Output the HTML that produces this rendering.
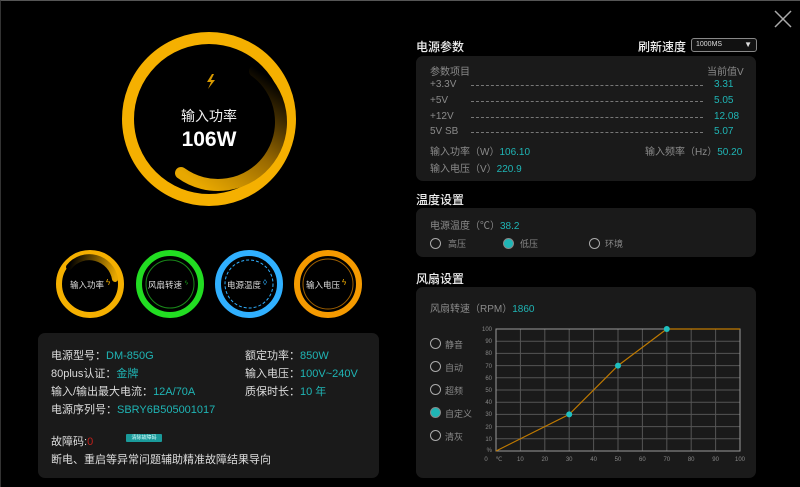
<!DOCTYPE html>
<html><head><meta charset="utf-8"><style>
*{margin:0;padding:0;box-sizing:border-box}
body{width:800px;height:487px;background:#000;overflow:hidden;position:relative;font-family:"Liberation Sans","Noto Sans CJK SC",sans-serif;color:#ddd;border-top:1px solid #555;border-left:1px solid #333}
.abs{position:absolute}
.panel{position:absolute;background:#1a1a1a;border-radius:7px}
.t{position:absolute;font-size:11px;white-space:nowrap}
.g{color:#8a8a8a}
.c{color:#1fb5b5}
.h{position:absolute;font-size:12px;color:#eee;font-weight:500;white-space:nowrap}
.dash{position:absolute;border-top:1px dashed #777;height:0}
.rad{position:absolute;width:11px;height:11px;border:1.5px solid #aaa;border-radius:50%}
.rad.on{background:#1fb5b5;border-color:#888}
</style></head><body>
<svg class="abs" style="left:0;top:0" width="400" height="330">
<defs>
<linearGradient id="ga" gradientUnits="userSpaceOnUse" x1="190" y1="178" x2="262" y2="72"><stop offset="0" stop-color="#e8a800"/><stop offset="0.45" stop-color="#9a6a00"/><stop offset="1" stop-color="#000"/></linearGradient>
<linearGradient id="gb" gradientUnits="userSpaceOnUse" x1="68" y1="266" x2="114" y2="278"><stop offset="0" stop-color="#000"/><stop offset="1" stop-color="#e8a800"/></linearGradient>
</defs>
<circle cx="208" cy="118" r="81" fill="none" stroke="#f5b000" stroke-width="12"/>
<path d="M180 172 A58 58 0 0 0 254 70" fill="none" stroke="url(#ga)" stroke-width="12" stroke-linecap="round"/>
<path d="M211 73 l-5 8 h4 l-3 7 l7-9 h-4 l3-6z" fill="#d89a00"/>
<text x="208" y="120" fill="#eee" font-size="14" text-anchor="middle" font-family="Noto Sans CJK SC">输入功率</text>
<text x="208" y="145" fill="#fff" font-size="21" font-weight="bold" text-anchor="middle" font-family="Liberation Sans">106W</text>
<circle cx="89" cy="283" r="31" fill="none" stroke="#f5b000" stroke-width="6"/>
<path d="M68 266 A26 26 0 0 1 114 278" fill="none" stroke="url(#gb)" stroke-width="6" stroke-linecap="round"/>
<circle cx="169" cy="283" r="31" fill="none" stroke="#22dd22" stroke-width="6"/>
<circle cx="169" cy="283" r="24" fill="none" stroke="#1a8a1a" stroke-width="1"/>
<circle cx="248" cy="283" r="31" fill="none" stroke="#30b0ff" stroke-width="6"/>
<circle cx="248" cy="283" r="24" fill="none" stroke="#30b0ff" stroke-width="1" stroke-dasharray="3 2"/>
<circle cx="327" cy="283" r="31" fill="none" stroke="#f59a00" stroke-width="6"/>
<circle cx="327" cy="283" r="25" fill="none" stroke="#a06000" stroke-width="1"/>
<g font-size="8.5" fill="#ddd" text-anchor="middle" font-family="Noto Sans CJK SC">
<text x="86" y="287">输入功率</text><text x="164" y="287">风扇转速</text><text x="243" y="287">电源温度</text><text x="322" y="287">输入电压</text></g>
<text x="105" y="284" fill="#f5b000" font-size="8">ϟ</text>
<text x="183" y="284" fill="#22dd22" font-size="8">ᛃ</text>
<text x="262" y="284" fill="#30b0ff" font-size="8">◊</text>
<text x="341" y="284" fill="#f5b000" font-size="8">ϟ</text>
</svg>
<svg class="abs" style="left:773px;top:9px" width="18" height="18"><path d="M1 1L17 17M17 1L1 17" stroke="#aaa" stroke-width="1.5"/></svg>

<div class="panel" style="left:37px;top:332px;width:341px;height:145px"></div>
<div class="t" style="left:50px;top:346px">电源型号：<span class="c">DM-850G</span></div>
<div class="t" style="left:50px;top:364px">80plus认证：<span class="c">金牌</span></div>
<div class="t" style="left:50px;top:382px">输入/输出最大电流：<span class="c">12A/70A</span></div>
<div class="t" style="left:50px;top:400px">电源序列号：<span class="c">SBRY6B505001017</span></div>
<div class="t" style="left:244px;top:346px">额定功率：<span class="c">850W</span></div>
<div class="t" style="left:244px;top:364px">输入电压：<span class="c">100V~240V</span></div>
<div class="t" style="left:244px;top:382px">质保时长：<span class="c">10 年</span></div>
<div class="t" style="left:50px;top:432px">故障码:<span style="color:#c0201a">0</span></div>
<div class="abs" style="left:125px;top:433px;width:36px;height:8px;background:#1a9a9a;border-radius:1px;font-size:5px;color:#dff;text-align:center;line-height:8px">清除故障码</div>
<div class="t" style="left:50px;top:450px">断电、重启等异常问题辅助精准故障结果导向</div>

<div class="h" style="left:415px;top:37px">电源参数</div>
<div class="h" style="left:637px;top:37px">刷新速度</div>
<div class="abs" style="left:690px;top:37px;width:66px;height:14px;border:1px solid #888;border-radius:3px;font-size:7px;line-height:12px;color:#ddd;padding:0 4px;background:#111">1000MS<span style="position:absolute;right:4px;top:0;font-size:8px">▼</span></div>
<div class="panel" style="left:415px;top:55px;width:340px;height:125px"></div>
<div class="t g" style="left:429px;top:62px;font-size:10px">参数项目</div>
<div class="t g" style="left:706px;top:62px;font-size:10px">当前值V</div>
<div class="t g" style="left:429px;top:78px;font-size:10px">+3.3V</div>
<div class="t g" style="left:429px;top:94px;font-size:10px">+5V</div>
<div class="t g" style="left:429px;top:110px;font-size:10px">+12V</div>
<div class="t g" style="left:429px;top:125px;font-size:10px">5V SB</div>
<div class="dash" style="left:470px;top:84px;width:232px"></div>
<div class="dash" style="left:470px;top:100px;width:232px"></div>
<div class="dash" style="left:470px;top:116px;width:232px"></div>
<div class="dash" style="left:470px;top:131px;width:232px"></div>
<div class="t c" style="left:713px;top:78px;font-size:10px">3.31</div>
<div class="t c" style="left:713px;top:94px;font-size:10px">5.05</div>
<div class="t c" style="left:713px;top:110px;font-size:10px">12.08</div>
<div class="t c" style="left:713px;top:125px;font-size:10px">5.07</div>
<div class="t g" style="left:429px;top:142px;font-size:10px">输入功率（W）<span class="c">106.10</span></div>
<div class="t g" style="left:644px;top:142px;font-size:10px">输入频率（Hz）<span class="c">50.20</span></div>
<div class="t g" style="left:429px;top:159px;font-size:10px">输入电压（V）<span class="c">220.9</span></div>

<div class="h" style="left:415px;top:190px">温度设置</div>
<div class="panel" style="left:415px;top:207px;width:340px;height:49px"></div>
<div class="t g" style="left:429px;top:216px;font-size:10px">电源温度（℃）<span class="c">38.2</span></div>
<div class="rad" style="left:429px;top:237px"></div><div class="t g" style="left:447px;top:236px;font-size:9px">高压</div>
<div class="rad on" style="left:502px;top:237px"></div><div class="t g" style="left:519px;top:236px;font-size:9px">低压</div>
<div class="rad" style="left:588px;top:237px"></div><div class="t g" style="left:604px;top:236px;font-size:9px">环境</div>

<div class="h" style="left:415px;top:269px">风扇设置</div>
<div class="panel" style="left:415px;top:286px;width:340px;height:191px"></div>
<div class="t g" style="left:429px;top:299px;font-size:10px">风扇转速（RPM）<span class="c">1860</span></div>
<div class="rad" style="left:429px;top:337px"></div><div class="t g" style="left:444px;top:337px;font-size:9px">静音</div>
<div class="rad" style="left:429px;top:360px"></div><div class="t g" style="left:444px;top:360px;font-size:9px">自动</div>
<div class="rad" style="left:429px;top:383px"></div><div class="t g" style="left:444px;top:383px;font-size:9px">超频</div>
<div class="rad on" style="left:429px;top:406px"></div><div class="t g" style="left:444px;top:406px;font-size:9px">自定义</div>
<div class="rad" style="left:429px;top:429px"></div><div class="t g" style="left:444px;top:429px;font-size:9px">清灰</div>
<svg class="abs" style="left:480px;top:320px" width="270" height="150" font-size="6" fill="#888" font-family="Liberation Sans">
<g stroke="#555" stroke-width="1">
<line x1="15" y1="8" x2="259" y2="8"/><line x1="15" y1="20.2" x2="259" y2="20.2"/><line x1="15" y1="32.4" x2="259" y2="32.4"/><line x1="15" y1="44.6" x2="259" y2="44.6"/><line x1="15" y1="56.8" x2="259" y2="56.8"/><line x1="15" y1="69" x2="259" y2="69"/><line x1="15" y1="81.2" x2="259" y2="81.2"/><line x1="15" y1="93.4" x2="259" y2="93.4"/><line x1="15" y1="105.6" x2="259" y2="105.6"/><line x1="15" y1="117.8" x2="259" y2="117.8"/>
<line x1="39.4" y1="8" x2="39.4" y2="130"/><line x1="63.8" y1="8" x2="63.8" y2="130"/><line x1="88.2" y1="8" x2="88.2" y2="130"/><line x1="112.6" y1="8" x2="112.6" y2="130"/><line x1="137" y1="8" x2="137" y2="130"/><line x1="161.4" y1="8" x2="161.4" y2="130"/><line x1="185.8" y1="8" x2="185.8" y2="130"/><line x1="210.2" y1="8" x2="210.2" y2="130"/><line x1="234.6" y1="8" x2="234.6" y2="130"/>
</g>
<rect x="15" y="8" width="244" height="122" fill="none" stroke="#999"/>
<polyline points="15,130 88.2,93.4 137,44.6 185.8,8 259,8" fill="none" stroke="#c07a00" stroke-width="1.2"/>
<circle cx="88.2" cy="93.4" r="3" fill="#1fc0c0"/><circle cx="137" cy="44.6" r="3" fill="#1fc0c0"/><circle cx="185.8" cy="8" r="3" fill="#1fc0c0"/>
<g text-anchor="end"><text x="11" y="10">100</text><text x="11" y="22">90</text><text x="11" y="34">80</text><text x="11" y="47">70</text><text x="11" y="59">60</text><text x="11" y="71">50</text><text x="11" y="83">40</text><text x="11" y="95">30</text><text x="11" y="108">20</text><text x="11" y="120">10</text><text x="11" y="131">%</text></g>
<g text-anchor="middle"><text x="5" y="140">0</text><text x="18" y="140">℃</text><text x="39.4" y="140">10</text><text x="63.8" y="140">20</text><text x="88.2" y="140">30</text><text x="112.6" y="140">40</text><text x="137" y="140">50</text><text x="161.4" y="140">60</text><text x="185.8" y="140">70</text><text x="210.2" y="140">80</text><text x="234.6" y="140">90</text><text x="259" y="140">100</text></g>
</svg>
</body></html>
